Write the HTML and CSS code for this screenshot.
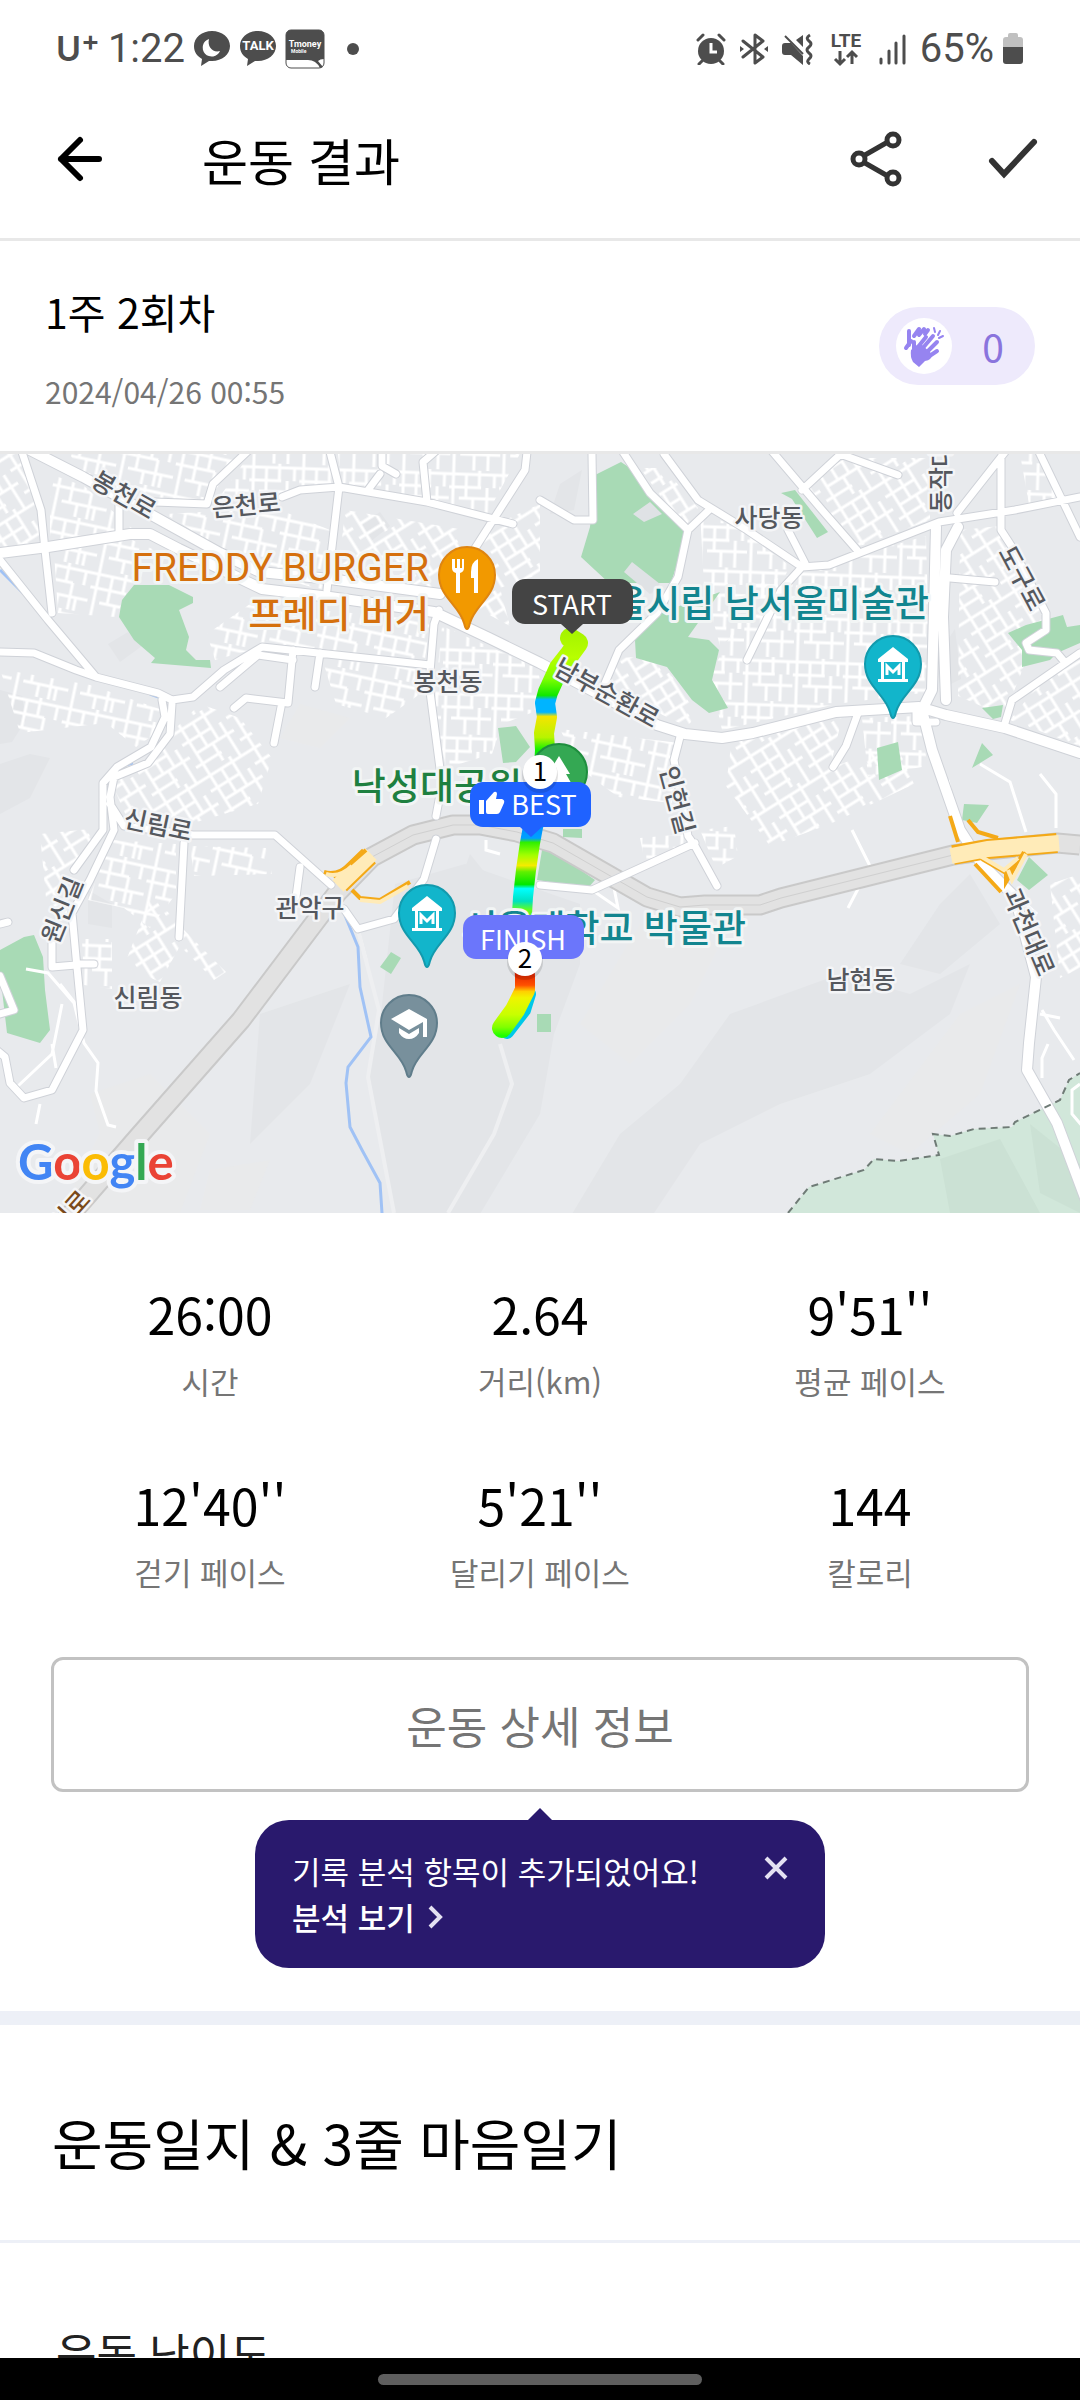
FILE: index.html
```html
<!DOCTYPE html>
<html lang="ko">
<head>
    <meta charset="UTF-8">
    <meta name="viewport" content="width=device-width, initial-scale=1.0">
    <title>운동 결과</title>
    <link rel="stylesheet" href="styles.css">
</head>
<body>
    <div class="status-bar">
        <div class="status-left">
            <span class="carrier">U<sup>+</sup></span>
            <span class="clock">1:22</span>
            <svg class="notif" width="38" height="38" viewBox="0 0 38 38">
                <path d="M19 1C9 1 1 7.500 1 16c0 6 3 10 8 13L8 36l8-5h3c10 0 18-6.500 18-15S29 1 19 1z" fill="#4d4d4d"/>
                <path d="M16 9a9 9 0 1 0 11 12C20 23 14 17 16 9z" fill="#fff"/>
            </svg>
            <svg class="notif" width="38" height="38" viewBox="0 0 38 38">
                <path d="M19 1C9 1 1 7.500 1 16c0 6 3 10 8 13L8 36l8-5h3c10 0 18-6.500 18-15S29 1 19 1z" fill="#4d4d4d"/>
                <text class="talk" x="19" y="20" text-anchor="middle">TALK</text>
            </svg>
            <svg class="notif" width="40" height="40" viewBox="0 0 40 40">
                <rect x="1" y="1" width="38" height="38" rx="5" fill="#fff" stroke="#4d4d4d"/>
                <path d="M1 31V6a5 5 0 0 1 5-5h28a5 5 0 0 1 5 5v24q-4 0-6 2l5 6-3 1q-4-8-12-8z" fill="#4d4d4d"/>
                <text class="tmoney" x="20" y="18" text-anchor="middle">Tmoney</text>
                <text class="tmoney-sub" x="6" y="24">Mobile</text>
            </svg>
            <span class="dot"></span>
        </div>
        <div class="status-right">
            <svg width="30" height="32" viewBox="0 0 30 32">
                <circle cx="15" cy="18" r="13" fill="#4d4d4d"/>
                <path d="M2 7l5-5M28 7l-5-5M6 28l-3 3M24 28l3 3" stroke="#4d4d4d" stroke-width="3" stroke-linecap="round"/>
                <path d="M15 10v9h6" fill="none" stroke="#fff" stroke-width="3"/>
            </svg>
            <svg width="28" height="34" viewBox="0 0 28 34">
                <path d="M3 9l20 16-8 6V3l8 6L3 25" fill="none" stroke="#4d4d4d" stroke-width="3" stroke-linejoin="round" stroke-linecap="round"/>
                <path d="M0 14l4 3-4 3zM28 14l-4 3 4 3z" fill="#4d4d4d"/>
            </svg>
            <svg width="32" height="32" viewBox="0 0 32 32">
                <path d="M0 13q0-3 3-3h6l12 13v9L9 22H3q-3 0-3-3zM21 2v12l-7-7z" fill="#4d4d4d"/>
                <path d="M3 3l18 18" stroke="#4d4d4d" stroke-width="2"/>
                <path d="M28 2q-5 3-1 6t0 6q-4 3 0 6t0 6q-3 3 1 5" fill="none" stroke="#4d4d4d" stroke-width="3"/>
            </svg>
            <svg width="36" height="36" viewBox="0 0 36 36">
                <text class="lte" x="18" y="16" text-anchor="middle">LTE</text>
                <path d="M12 20v12M7 28l5 5 5-5M24 33V21M19 26l5-5 5 5" fill="none" stroke="#4d4d4d" stroke-width="3"/>
            </svg>
            <svg width="28" height="32" viewBox="0 0 28 32">
                <path d="M3 30v-4M11 30V18M18 30V10M26 30V3" stroke="#4d4d4d" stroke-width="3" stroke-linecap="round"/>
            </svg>
            <div class="battery">
                <span class="battery-text">65%</span>
                <svg width="22" height="34" viewBox="0 0 22 34">
                    <path d="M1 15V8q0-3 3-3h2V3q0-2 2-2h6q2 0 2 2v2h2q3 0 3 3v7z" fill="#c0c0c0"/>
                    <path d="M1 15h20v14q0 3-3 3H4q-3 0-3-3z" fill="#4d4d4d"/>
                </svg>
            </div>
        </div>
    </div>

    <header class="app-bar">
        <button class="icon-btn" aria-label="뒤로">
            <svg width="48" height="48" viewBox="0 0 48 48">
                <path d="M43 24H5M24 5L5 24l19 19" fill="none" stroke="#000" stroke-width="6" stroke-linecap="round" stroke-linejoin="round"/>
            </svg>
        </button>
        <h1>운동 결과</h1>
        <div class="actions">
            <button class="icon-btn" aria-label="공유">
                <svg width="52" height="56" viewBox="0 0 52 56">
                    <path d="M15 24l21-12M15 32l21 12" stroke="#333" stroke-width="5"/>
                    <g fill="none" stroke="#333" stroke-width="5">
                        <circle cx="9" cy="28" r="6"/>
                        <circle cx="43" cy="9" r="6"/>
                        <circle cx="43" cy="47" r="6"/>
                    </g>
                </svg>
            </button>
            <button class="icon-btn" aria-label="확인">
                <svg width="50" height="48" viewBox="0 0 50 48">
                    <path d="M4 26l12 13L46 7" fill="none" stroke="#333" stroke-width="6" stroke-linecap="round"/>
                </svg>
            </button>
        </div>
    </header>

    <main class="content">
        <section class="session">
            <div>
                <h2>1주 2회차</h2>
                <p class="date">2024/04/26 00:55</p>
            </div>
            <button class="clap" aria-label="박수">
                <span class="clap-icon">
                    <svg width="42" height="44" viewBox="0 0 42 44">
                        <g stroke="#9684f0" stroke-linecap="round" stroke-width="4">
                            <path d="M6 7v14M11 12l5-7M16 11l5-6M22 10l3-4"/>
                            <path d="M31 4l1 4M37 7l-2 4M40 12l-4 2" stroke-width="2"/>
                        </g>
                        <path d="M3 24l5-7" stroke="#9684f0" stroke-width="4" stroke-linecap="round"/>
                        <path d="M11 18v12M15 23l8-10M19 25l11-13M23 29l11-11M25 33l9-6" fill="none" stroke="#9684f0" stroke-linecap="round" stroke-width="4"/>
                        <path d="M8 26l6-5 4-1 11 10q0 6-7 7l-6 6-6-5q-3-5-2-12z" fill="#9684f0"/>
                    </svg>
                </span>
                <span class="clap-count">0</span>
            </button>
        </section>

        <section class="map">
            <svg viewBox="0 0 1080 759" role="img" aria-label="운동 경로 지도">
                <defs>
                    <!-- small streets, three angles -->
                    <pattern id="blocks-a" width="58" height="46" patternUnits="userSpaceOnUse" patternTransform="rotate(12)">
                        <path d="M0 5h58M0 19h40M12 33h46M6 0v46M20 5v28M33 0v19M40 19v27M51 5v14M28 33v13M46 33v13" fill="none" stroke="#fff" stroke-width="3"/>
                    </pattern>
                    <pattern id="blocks-b" width="52" height="54" patternUnits="userSpaceOnUse" patternTransform="rotate(-32)">
                        <path d="M0 6h52M0 20h34M8 34h44M0 46h30M8 0v54M21 6v28M34 0v34M44 20v34M27 34v20M44 0v6" fill="none" stroke="#fff" stroke-width="3"/>
                    </pattern>
                    <pattern id="blocks-c" width="50" height="44" patternUnits="userSpaceOnUse" patternTransform="rotate(2)">
                        <path d="M0 4h50M0 17h32M10 28h40M4 0v44M17 4v24M30 0v17M38 17v27M45 4v13M24 28v16" fill="none" stroke="#fff" stroke-width="3"/>
                    </pattern>
                    <linearGradient id="pace" gradientUnits="userSpaceOnUse" x1="0" y1="170" x2="0" y2="590">
                        <stop offset="0" stop-color="#a0f000"/>
                        <stop offset="0.08" stop-color="#b8ff00"/>
                        <stop offset="0.13" stop-color="#80ff00"/>
                        <stop offset="0.17" stop-color="#10e800"/>
                        <stop offset="0.18" stop-color="#00b4ff"/>
                        <stop offset="0.21" stop-color="#00b4ff"/>
                        <stop offset="0.22" stop-color="#f5e400"/>
                        <stop offset="0.27" stop-color="#b8f400"/>
                        <stop offset="0.3" stop-color="#10f000"/>
                        <stop offset="0.48" stop-color="#0090ff"/>
                        <stop offset="0.51" stop-color="#00a0ff"/>
                        <stop offset="0.52" stop-color="#30f000"/>
                        <stop offset="0.55" stop-color="#a0ff00"/>
                        <stop offset="0.575" stop-color="#f4ec00"/>
                        <stop offset="0.59" stop-color="#60f000"/>
                        <stop offset="0.62" stop-color="#00e800"/>
                        <stop offset="0.63" stop-color="#00ffff"/>
                        <stop offset="0.66" stop-color="#00e0c0"/>
                        <stop offset="0.68" stop-color="#60ff20"/>
                        <stop offset="0.83" stop-color="#e02000"/>
                        <stop offset="0.86" stop-color="#ff5000"/>
                        <stop offset="0.875" stop-color="#ffd000"/>
                        <stop offset="0.89" stop-color="#f0f400"/>
                        <stop offset="0.93" stop-color="#c8ff00"/>
                        <stop offset="0.96" stop-color="#80ff00"/>
                        <stop offset="0.98" stop-color="#20ff00"/>
                    </linearGradient>
                    <path id="pin" d="M0 54c-2 0-2-3-3-6C-8 30-28 22-28 0a28 28 0 0 1 56 0C28 22 8 30 3 48c-1 3-1 6-3 6z"/>
                    <g id="museum">
                        <path d="M-15-5L0-17 15-5v3h-3v17h3v3h-30v-3h3V-2h-3zM-9-2v17H9V-2z" fill="#fff" fill-rule="evenodd"/>
                        <path d="M-6 11V2l6 6 6-6v9" fill="none" stroke="#fff" stroke-width="3"/>
                    </g>
                </defs>

                <rect width="1080" height="759" fill="#e8eaed"/>

                <!-- terrain -->
                <g fill="#e3e5e8">
                    <path d="M395 430l70-20 115 40v60l-26 70-14 80-60 100H395l-26-140 12-60z"/>
                    <path d="M730 560l110-40 70 20 60-30-20 50-80 60-90 30-80 40-60 90h-80l60-100 60-50z"/>
                    <path d="M260 560l90-30-40 100-60 60zM0 236l22 6 4 24-14 22-12 2zM30 300l20 4-20 40-30 16v-50zM108 190l20-12 14 14-22 16zM88 436l24 14v24l-24-4z"/>
                    <path d="M362 70l18-12 10 14-20 16zM624 120l10-12 26 18-8 14zM560 30l22-14-8 40-24 4zM935 205l20-30 6 50-20 10zM970 420l30 50-60 50-40-10 40-60zM470 400l16 20-14 40-20-10z"/>
                </g>
                <g fill="#e9eaeb">
                    <path d="M90 640l60-20 60 60-30 79H60l40-80zM640 470l80 20-30 60-60 60-50-40zM960 560l60-30-40 110-70 60-40-20zM210 716l60-10-20 50h-50zM300 250l50 14-30 30-40-10z"/>
                </g>
                <path d="M788 759l21-26 55-17 10-11 24 2 41-6-6-21 17 2 24-7 38-2 3-5 45-22 9-20 11-7v140z" fill="#d1e7da"/>
                <path d="M940 705l60-20 40 74h-90zM1030 670l50 40v49l-40-20z" fill="#cbe1d4"/>

                <!-- street blocks -->
                <g fill="url(#blocks-a)">
                    <path d="M70 0h170l-34 50-54-2-72-28zM50 20l34 12 50 44-84 12zM54 98l76-13 40 18-40 28-14 32-58-4z"/>
                    <path d="M250 150l180 16-5 40-160-14-50 14-8-26zM322 204l104 12-6 24-34 24-50-14zM0 215l90 16 70 24-4 24-20 14-30-24-86 10z"/>
                    <path d="M112 386l64 4v50l-26 34-26-20-36-8zM190 392l76 2 6 26-78 2z"/>
                    <path d="M560 275l120 14-8 60-54-6-40-30zM165 60l110-6 55 22-8 60-70-20-70-46z"/>
                </g>
                <g fill="url(#blocks-b)">
                    <path d="M0 0h20l20 58 4 34-44 6zM150 300l50-50 40 14 32 40-14 46-68 20-62-4-16-36zM345 56l120 20-8 22-26 42-94-8z"/>
                    <path d="M610 205l48-4 38 58-8 14-80-38zM640 14l24 0 34 40-14 20zM800 32l46-28 84 0v62l-70 26zM960 76l40-4 44 90-40 100-46-20z"/>
                    <path d="M732 284l110-20-12 50 66-24 18 40-84 40-60 22-44-60zM152 440l30 34 44 44-12 8-34-34-20 36-36-16zM1050 430l30-10v94l-20 10zM1052 214l28-8v86l-70-26z"/>
                    <path d="M40 380l60-6-26 40-8 50-20-20zM470 100l26-30 44-20v70l-40 14 10 38-30-16z"/>
                </g>
                <g fill="url(#blocks-c)">
                    <path d="M722 140l84-24 120-34 4 156-94 12-114 26-12-54 30-60zM338 0h100l84-4-36 66-60-14-84-14zM250 0h76l10 30-60 12-60 6z"/>
                    <path d="M442 172l96 42 6 40-42 16-10 30-46 14-12-60zM82 485h30v50l-28-4zM640 384l46-4 10 10-50 24zM700 376l34-4 4 30-22 12z"/>
                    <path d="M1020 0h20l30 50-40 6zM700 56l40 20 50 36-20 40-50 40-16-60zM862 264l56-2 10 50-60 10z"/>
                </g>

                <!-- parks -->
                <g fill="#a8dab5">
                    <path d="M134 131h35l24 12v6l-14 7 10 27-3 13 10 10h14l1 8-60-5 4-5-21-18-15-23 3-17z"/>
                    <path d="M621 8l15 10 18 28 34 30-17 53h-62l-28-26 9-30 5-52z"/>
                    <path d="M659 159l61-21-32 45 21 3 10 10-7 30 16 28-19 5-17-13-25-33-31-9-1-18z"/>
                    <path d="M781 39l14-3 33 42-11 6-25-39zM1008 179l18-8 37-10 4 12 13-2v18l-23 10-7 7-28 7v-17z"/>
                    <path d="M982 254l21-3-2 12-8 2zM877 294l21-6 4 28-23 10zM982 289l11 12-21 13zM964 350l25 1-12 18-15-3z"/>
                    <path d="M498 274l18-2 14 21-14 15-13 1zM543 390l52 36-7 8-51-8zM563 375h19v9l-19-1z"/>
                    <path d="M0 496l24-13 10-2 9 22 2 33 5 40-10 13-33-10-7-60zM391 498l10 6-10 16-11-7zM537 560h14v18h-14zM1029 403l19 18-19 15-12-10z"/>
                </g>
                <path d="M633 60l17-12 12 12-18 8zM624 118l8-10 28 22-10 10z" fill="#dfe2e5"/>

                <!-- loose lanes -->
                <g fill="none" stroke="#fff" stroke-width="3">
                    <path d="M26 515l22 4 26 30 10 40 14 20-2 28 12 34 8 2M62 550l-10 50-34 32M52 590l4 24M40 650l-4 20M960 376l-12-50M852 376l18 36-22 42M1015 440l22 20M1040 560l20 4M1042 556l12 20 20 30M1048 590l-6 14v20M1080 630l-8 6v24l12 14"/>
                    <path d="M592 436l26 18-4-20M500 400l-14-4 0-10M358 476l8 30M980 310l30 18 16 50M1040 320l16 20v34M60 530l22 28"/>
                </g>
                <path d="M358 476l21 80-11 67 26 136M500 590l12 40-18 50-46 79" fill="none" stroke="#eeeff1" stroke-width="4"/>
                <path d="M344 459l14 34 2 40 11 50-23 30-2 16 4 44 12 23 18 33 2 30M0 116l27 27 16 20M150 240l20 7M117 313l16-4" fill="none" stroke="#a0c2f5" stroke-width="3"/>

                <!-- expressway -->
                <g fill="none" stroke-linejoin="round">
                    <path d="M58 775l80-92 103-117 96-127 35-36 41-22 40-10h27l37 7 36 11 94 54 33 10 25-2h55l21-7 172-43 35-5 69-7 23 2" stroke="#c9c9c9" stroke-width="21"/>
                    <path d="M58 775l80-92 103-117 96-127 35-36 41-22 40-10h27l37 7 36 11 94 54 33 10 25-2h55l21-7 172-43 35-5 69-7 23 2" stroke="#e2e2e2" stroke-width="17"/>
                    <path d="M372 403l41-22 40-10h27l37 7 36 11 94 54 33 10 25-2h55l21-7 172-43" stroke="#cfcfcf" stroke-width="1"/>
                </g>

                <!-- main roads -->
                <g fill="none" stroke-linecap="round" stroke-linejoin="round">
                    <g stroke="#cfd2d8">
                        <path stroke-width="12" d="M0 99l48-6 82-13h20l29 15 83 40 68 8 104 15 55 26 51 25 117 62 28 9 37 4 31-5 83-21 83-5 27 8 59 13 75 25M30-4l53 27 137 76 40 19 70 7 110 15M936 73l-4 163-10 20 10 40 28 80 21 33 34 34 21 80-7 66-2 27 30 53 30 80M958 73l-12 23-3 67 3 83"/>
                        <path stroke-width="9" d="M22-2l19 58 4 40 7 63M0 106l48 60 48 57 62 16 14 7 21-3 31-27 38-23 168 18M0 198l34 1 42 17 20 7M162 246l3 17-14 30-34 20-14 16v47l-29 40M172 250l-2 30-22 29-34 14-4 20 4 33-24 50-18 33 4 44 7 73-31 60-28 8-14-15-5-26-12-10M110 350l14 22 69 9h82l28 25 28 25M184 389l-5 94M300 413l-4 30M439 156l-5 14-5 60 13 100-6 32M330-2l9 35-12 103M155 48l52 2 6-20 36-34M282 43l18-7 39-3 88 15 86 22M527-2l-2 18-53 83M664 0l34 46 49 30 55 37 27-2 110-43 76-12 65-13M623-2l27 41 38 37-10 47-21 36-38 37-14 33M709 56l-21 20M771-4l51 60 35 40M843-2l-41 38M840 0l58 21M1005-2l-48 61M1001 3v73l11 17 34 66v17l-20 13 3 7 28 3 6 7M1039-2l41 85M1080 199l-68 47-7 23M802 113l-21 23-34 70M805 109l-17-33M681 279l-7 27 14 76 7 10 22 40M695 389l-103 47-52-5M858 259l-12 33-13 21M950 124l45 4M592 0l1 66h-19l-34-20M293 196l-5 53-42-5-12 10M281 253l-7 36M320 199l-5 34M220 233l38-32 35 5M52 475l0 38 24-2M427 48l-4-40 14-12M380 20l-12 16M119 80v-30M396 20l-14-8 0-14M936 268h-20v-12M436 385l-12 40-30 40-36 10-14-20M76 510l18 0M0 560l14-4-14-34M0 470l8-2"/>
                    </g>
                    <g stroke="#fff">
                        <path stroke-width="10" d="M0 99l48-6 82-13h20l29 15 83 40 68 8 104 15 55 26 51 25 117 62 28 9 37 4 31-5 83-21 83-5 27 8 59 13 75 25M30-4l53 27 137 76 40 19 70 7 110 15M936 73l-4 163-10 20 10 40 28 80 21 33 34 34 21 80-7 66-2 27 30 53 30 80M958 73l-12 23-3 67 3 83"/>
                        <path stroke-width="7" d="M22-2l19 58 4 40 7 63M0 106l48 60 48 57 62 16 14 7 21-3 31-27 38-23 168 18M0 198l34 1 42 17 20 7M162 246l3 17-14 30-34 20-14 16v47l-29 40M172 250l-2 30-22 29-34 14-4 20 4 33-24 50-18 33 4 44 7 73-31 60-28 8-14-15-5-26-12-10M110 350l14 22 69 9h82l28 25 28 25M184 389l-5 94M300 413l-4 30M439 156l-5 14-5 60 13 100-6 32M330-2l9 35-12 103M155 48l52 2 6-20 36-34M282 43l18-7 39-3 88 15 86 22M527-2l-2 18-53 83M664 0l34 46 49 30 55 37 27-2 110-43 76-12 65-13M623-2l27 41 38 37-10 47-21 36-38 37-14 33M709 56l-21 20M771-4l51 60 35 40M843-2l-41 38M840 0l58 21M1005-2l-48 61M1001 3v73l11 17 34 66v17l-20 13 3 7 28 3 6 7M1039-2l41 85M1080 199l-68 47-7 23M802 113l-21 23-34 70M805 109l-17-33M681 279l-7 27 14 76 7 10 22 40M695 389l-103 47-52-5M858 259l-12 33-13 21M950 124l45 4M592 0l1 66h-19l-34-20M293 196l-5 53-42-5-12 10M281 253l-7 36M320 199l-5 34M220 233l38-32 35 5M52 475l0 38 24-2M427 48l-4-40 14-12M380 20l-12 16M119 80v-30M396 20l-14-8 0-14M936 268h-20v-12M436 385l-12 40-30 40-36 10-14-20M76 510l18 0M0 560l14-4-14-34M0 470l8-2"/>
                    </g>
                </g>

                <!-- interchanges -->
                <g fill="none">
                    <path d="M340 430l29-28M953 401l35-6 69-6" stroke="#f4a917" stroke-width="20"/>
                    <path d="M338 432l33-32M951 402l37-7 71-6" stroke="#ffebb8" stroke-width="16"/>
                    <path d="M324 418q14 4 26-8l16-14M352 436l8 8 20 2 30-18M950 362l8 26M968 366l10 12 20 6M975 410l26 28M982 405l24 14 12-12 8-8M1006 418v10l18-30" stroke="#f4a917" stroke-width="4"/>
                    <path d="M326 420q14 4 26-8M360 446l20 2 28-16M980 402l24 14 14-12M1008 416l4 10 14-26" stroke="#ffebb8" stroke-width="4"/>
                </g>
                <path d="M788 759l21-26 55-17 10-11 24 2 41-6-6-21 17 2 24-7 38-2 3-5 45-22 9-20 11-7" fill="none" stroke="#6f7b76" stroke-width="2" stroke-dasharray="7 5"/>

                <!-- route -->
                <path d="M529 540l-5 16-17 22" fill="none" stroke="#00c8e8" stroke-width="14" stroke-linecap="round"/>
                <path d="M570 184l8 5-8 11-11 14-11 24-3 11 2 14-3 16 1 17-2 34-10 43-3 16-4 27-3 27-1 17 2 40 1 23v13l-10 20-13 18" fill="none" stroke="url(#pace)" stroke-width="20" stroke-linecap="round" stroke-linejoin="round"/>

                <g class="road-label">
                    <text transform="translate(124 41) rotate(30)" dy="9">봉천로</text>
                    <text transform="translate(246 51) rotate(-5)" dy="9">은천로</text>
                    <text transform="translate(941 13) rotate(-90)" dy="9">동작대로</text>
                    <text transform="translate(1022 124) rotate(62)" dy="9">도구로</text>
                    <text transform="translate(607 239) rotate(29)" dy="9">남부순환로</text>
                    <text transform="translate(677 346) rotate(75)" dy="9">인헌길</text>
                    <text transform="translate(158 371) rotate(12)" dy="9">신림로</text>
                    <text transform="translate(62 456) rotate(-68)" dy="9">원신길</text>
                    <text transform="translate(1029 478) rotate(67)" dy="9">과천대로</text>
                    <text class="brown" transform="translate(62 766) rotate(-48)" dy="9">도시로</text>
                </g>
                <g class="area-label">
                    <text x="448" y="237">봉천동</text>
                    <text x="769" y="73">사당동</text>
                    <text x="310" y="463">관악구</text>
                    <text x="148" y="553">신림동</text>
                    <text x="861" y="535">남현동</text>
                </g>
                <g class="place-label">
                    <text class="food food-en" x="429" y="127">FREDDY BURGER</text>
                    <text class="food" x="429" y="174">프레디 버거</text>
                    <text class="park" x="522" y="346">낙성대공원</text>
                    <text class="museum" x="929" y="163">서울시립 남서울미술관</text>
                    <text class="museum" x="746" y="488">서울대학교 박물관</text>
                </g>

                <g stroke-width="2">
                    <g transform="translate(467 121)">
                        <use href="#pin" fill="#f29900" stroke="#df8510"/>
                        <path d="M-15-16v9q0 4 4 5v20h4V-2q4-1 4-5v-9h-2v9h-2v-9h-3v9h-2v-9zM11-16q-7 3-7 13v6h3v15h4z" fill="#fff"/>
                    </g>
                    <g transform="translate(893 210)">
                        <use href="#pin" fill="#12b5cb" stroke="#129aad"/>
                        <use href="#museum"/>
                    </g>
                    <g transform="translate(427 459)">
                        <use href="#pin" fill="#12b5cb" stroke="#129aad"/>
                        <use href="#museum"/>
                    </g>
                    <g transform="translate(409 569)">
                        <use href="#pin" fill="#78909c" stroke="#607d8b"/>
                        <path d="M0-14L-18-4 0 7 14-1v15h4V-4zM-10 5v5q4 6 10 6t10-6V5L0 11z" fill="#fff"/>
                    </g>
                    <circle cx="559" cy="318" r="28" fill="#34a853" stroke="#1e8e3e"/>
                    <path d="M559 302l-11 18h4l-8 14h30l-8-14h4z" fill="#fff"/>
                </g>

                <g class="badge">
                    <path d="M525 125h95a13 13 0 0 1 13 13v19a13 13 0 0 1-13 13h-37l-11 10-11-10h-36a13 13 0 0 1-13-13v-19a13 13 0 0 1 13-13z" fill="#444"/>
                    <text x="572" y="161">START</text>
                    <path d="M483 328h95a13 13 0 0 1 13 13v19a13 13 0 0 1-13 13h-36l-11 10-11-10h-37a13 13 0 0 1-13-13v-19a13 13 0 0 1 13-13z" fill="#1f62ff"/>
                    <path d="M479 346h5v14h-5zM486 347l8-9q3-1 3 2l-1 5h6q3 1 2 4l-4 9q-1 2-3 2h-9q-2 0-2-2z" fill="#fff"/>
                    <text x="544" y="361">BEST</text>
                    <rect x="463" y="461" width="121" height="44" rx="13" fill="#6b76fb"/>
                    <text x="523" y="496">FINISH</text>
                </g>
                <g class="km">
                    <circle cx="540" cy="321" r="18" fill="#000" opacity="0.12"/>
                    <circle cx="540" cy="318" r="17" fill="#fff"/>
                    <text x="540" y="327">1</text>
                    <circle cx="525" cy="508" r="18" fill="#000" opacity="0.12"/>
                    <circle cx="525" cy="505" r="17" fill="#fff"/>
                    <text x="525" y="514">2</text>
                </g>

                <text class="google" x="18" y="726"><tspan fill="#4285f4">G</tspan><tspan fill="#ea4335">o</tspan><tspan fill="#fbbc04">o</tspan><tspan fill="#4285f4">g</tspan><tspan fill="#34a853">l</tspan><tspan fill="#ea4335">e</tspan></text>
            </svg>
        </section>

        <section class="summary">
            <dl class="stats">
                <div><dd>26:00</dd><dt>시간</dt></div>
                <div><dd>2.64</dd><dt>거리(km)</dt></div>
                <div><dd>9'51''</dd><dt>평균 페이스</dt></div>
                <div><dd>12'40''</dd><dt>걷기 페이스</dt></div>
                <div><dd>5'21''</dd><dt>달리기 페이스</dt></div>
                <div><dd>144</dd><dt>칼로리</dt></div>
            </dl>
            <button class="detail-btn">운동 상세 정보</button>
            <div class="tooltip">
                <div>
                    <p>기록 분석 항목이 추가되었어요!</p>
                    <a href="#">분석 보기
                        <svg width="16" height="26" viewBox="0 0 16 26">
                            <path d="M3 3l10 10L3 23" fill="none" stroke="#e4e1f2" stroke-width="4"/>
                        </svg>
                    </a>
                </div>
                <button class="icon-btn" aria-label="닫기">
                    <svg width="24" height="24" viewBox="0 0 24 24">
                        <path d="M2 2l20 20M22 2L2 22" stroke="#e4e1f2" stroke-width="4"/>
                    </svg>
                </button>
            </div>
        </section>

        <section class="diary">
            <h2>운동일지 &amp; 3줄 마음일기</h2>
            <h3>운동 난이도</h3>
        </section>
    </main>

    <div class="nav-bar"><span></span></div>
</body>
</html>
```
FILE: styles.css
```css
* {
    box-sizing: border-box;
    margin: 0;
    padding: 0;
}

body {
    display: flex;
    flex-direction: column;
    height: 100vh;
    background: #fff;
    color: #000;
    font-family: 'Noto Sans CJK KR', sans-serif;
}

svg {
    display: block;
}

h1, h2, h3 {
    font-weight: 400;
}

button {
    border: none;
    background: none;
    font-family: inherit;
    cursor: pointer;
}

/* status bar */
.status-bar {
    display: flex;
    justify-content: space-between;
    align-items: center;
    height: 80px;
    padding: 18px 56px 0;
    font-family: Roboto, sans-serif;
    color: #4d4d4d;
}

.status-left, .status-right {
    display: flex;
    align-items: center;
    gap: 8px;
}

.status-right {
    gap: 14px;
}

.battery {
    display: flex;
    align-items: center;
    gap: 8px;
}

.carrier {
    display: flex;
    font-family: Inter, sans-serif;
    font-size: 34px;
    font-weight: 600;
    line-height: 40px;
}

.carrier sup {
    font-size: 28px;
    line-height: 24px;
}

.clock, .battery-text {
    font-size: 40px;
    line-height: 40px;
}

.talk {
    font: 700 13px Roboto, sans-serif;
    fill: #fff;
}

.tmoney {
    font: 700 9px Roboto, sans-serif;
    fill: #fff;
}

.tmoney-sub {
    font: 700 5px Roboto, sans-serif;
    fill: #fff;
}

.lte {
    font: 700 19px Roboto, sans-serif;
    fill: #4d4d4d;
}

.dot {
    width: 12px;
    height: 12px;
    margin-left: 14px;
    border-radius: 50%;
    background: #4d4d4d;
}

/* app bar */
.app-bar {
    display: flex;
    align-items: center;
    height: 161px;
    padding: 0 42px 0 56px;
    border-bottom: 3px solid #e8e8e8;
}

.app-bar h1 {
    margin-left: 98px;
    font-size: 50px;
    line-height: 74px;
}

.actions {
    display: flex;
    align-items: center;
    gap: 86px;
    margin-left: auto;
}

.content {
    flex: 1;
    min-height: 0;
    overflow: hidden;
}

/* session */
.session {
    display: flex;
    justify-content: space-between;
    align-items: flex-start;
    padding: 38px 45px 36px;
    border-bottom: 3px solid #e8e8e8;
}

.session h2 {
    font-size: 41px;
    line-height: 64px;
}

.date {
    margin-top: 24px;
    font-size: 30px;
    line-height: 48px;
    color: #757575;
}

.clap {
    display: flex;
    align-items: center;
    gap: 30px;
    height: 78px;
    margin-top: 28px;
    padding: 0 31px 0 17px;
    border-radius: 39px;
    background: #eeeafc;
    color: #8a74dd;
    font-size: 39px;
}

.clap-icon {
    display: flex;
    align-items: center;
    justify-content: center;
    width: 56px;
    height: 56px;
    border-radius: 50%;
    background: #fff;
}

/* map */
.map svg {
    width: 100%;
    height: auto;
}

.map text {
    paint-order: stroke;
    stroke-linejoin: round;
}

.road-label text, .area-label text {
    font-size: 25px;
    font-weight: 500;
    text-anchor: middle;
    fill: #55585e;
    stroke: #f4f5f7;
    stroke-width: 5px;
}

.road-label .brown {
    fill: #7a4a1a;
}

.place-label text {
    font-size: 37px;
    font-weight: 500;
    text-anchor: end;
    stroke: #f2f5f5;
    stroke-width: 6px;
}

.place-label .food {
    fill: #d5700d;
}

.place-label .food-en {
    font-family: Roboto, sans-serif;
    font-size: 39px;
    font-weight: 400;
}

.place-label .park {
    fill: #1e8040;
}

.place-label .museum {
    fill: #12858f;
}

.badge text {
    font-size: 27px;
    text-anchor: middle;
    fill: #fff;
}

.km text {
    font-size: 26px;
    text-anchor: middle;
}

.map .google {
    font-family: Lato, sans-serif;
    font-size: 49px;
    font-weight: 700;
    stroke: #f4f5f7;
    stroke-width: 8px;
}

/* summary */
.summary {
    padding: 60px 45px 43px;
    border-bottom: 14px solid #edf0f7;
}

.stats {
    display: grid;
    grid-template-columns: repeat(3, 1fr);
    row-gap: 57px;
    text-align: center;
}

.stats div {
    display: flex;
    flex-direction: column;
}

.stats dd {
    font-size: 50px;
    line-height: 80px;
}

.stats dt {
    margin-top: 2px;
    font-size: 31px;
    line-height: 52px;
    color: #757575;
}

.detail-btn {
    display: block;
    width: calc(100% - 12px);
    height: 135px;
    margin: 59px auto 28px;
    border: 3px solid #c2c2c2;
    border-radius: 12px;
    font-size: 44px;
    color: #757575;
}

.tooltip {
    position: relative;
    display: flex;
    justify-content: space-between;
    align-items: flex-start;
    width: 570px;
    margin: 0 auto;
    padding: 28px 37px 28px 37px;
    border-radius: 34px;
    background: #29196d;
    color: #fff;
    font-size: 31px;
    line-height: 46px;
}

.tooltip::before {
    content: "";
    position: absolute;
    top: -12px;
    left: 50%;
    margin-left: -12px;
    border: 12px solid transparent;
    border-top: none;
    border-bottom-color: #29196d;
}

.tooltip a {
    display: flex;
    align-items: center;
    gap: 12px;
    font-weight: 500;
    color: #fff;
    text-decoration: none;
}

.tooltip .icon-btn {
    margin-top: 8px;
}

/* diary */
.diary h2 {
    padding: 82px 52px 65px;
    border-bottom: 3px solid #edf0f7;
    font-size: 55px;
    line-height: 68px;
}

.diary h3 {
    padding: 76px 56px;
    font-size: 44px;
    line-height: 66px;
    color: #222;
}

/* system navigation */
.nav-bar {
    display: flex;
    justify-content: center;
    align-items: center;
    height: 42px;
    background: #000;
}

.nav-bar span {
    width: 30%;
    height: 11px;
    border-radius: 6px;
    background: #5e5e5e;
}
```
